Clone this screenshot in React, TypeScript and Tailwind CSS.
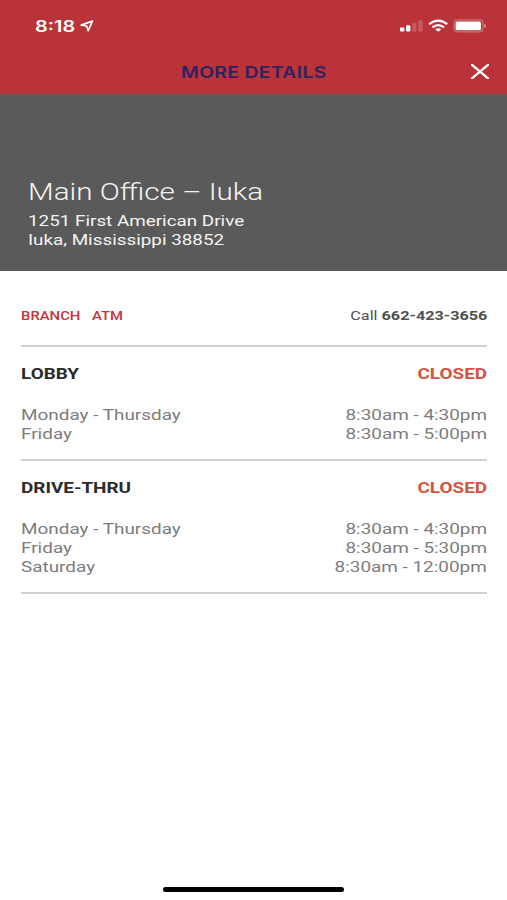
import React from 'react';

interface HoursRow {
  days: string;
  time: string;
}

interface HoursSection {
  title: string;
  status: string;
  rows: HoursRow[];
}

const sections: HoursSection[] = [
  {
    title: 'LOBBY',
    status: 'CLOSED',
    rows: [
      { days: 'Monday - Thursday', time: '8:30am - 4:30pm' },
      { days: 'Friday', time: '8:30am - 5:00pm' },
    ],
  },
  {
    title: 'DRIVE-THRU',
    status: 'CLOSED',
    rows: [
      { days: 'Monday - Thursday', time: '8:30am - 4:30pm' },
      { days: 'Friday', time: '8:30am - 5:30pm' },
      { days: 'Saturday', time: '8:30am - 12:00pm' },
    ],
  },
];

function StatusBar() {
  return (
    <div className="flex h-[52px] items-center justify-between pl-[35px] pr-[21px]">
      <div className="flex items-center">
        <span className="w-[40px] whitespace-nowrap pt-px font-['Inter',sans-serif] text-[15.5px] font-semibold leading-5">
          <span className="inline-block origin-left scale-x-[1.28]">8:18</span>
        </span>
        <svg className="ml-[5px]" width="14" height="12" viewBox="0 0 14 12" fill="none">
          <path d="M12.4 1.1 1.2 5.1 6.6 6 8.2 10.6Z" stroke="currentColor" strokeWidth="1.7" strokeLinejoin="round" />
        </svg>
      </div>
      <svg width="86" height="14" viewBox="0 0 86 14" fill="none">
        <rect x="0" y="8.4" width="4.4" height="4.2" rx="1" fill="currentColor" />
        <rect x="6" y="6.2" width="4.4" height="6.4" rx="1" fill="currentColor" />
        <rect x="12.1" y="3.8" width="4.4" height="8.8" rx="1" fill="currentColor" opacity="0.2" />
        <rect x="18.2" y="1.2" width="4.4" height="11.4" rx="1" fill="currentColor" opacity="0.2" />
        <g stroke="currentColor" strokeWidth="2.2">
          <path d="M29.2 5.1Q38.2-2 47.2 5.1" />
          <path d="M32.4 8.3Q38.2 3.8 44 8.3" />
        </g>
        <path d="M35.2 10.2Q38.2 8.2 41.2 10.2L38.2 12.8Z" fill="currentColor" />
        <rect x="54" y="0.9" width="29" height="12" rx="3.4" stroke="currentColor" strokeWidth="1.2" opacity="0.3" />
        <rect x="55.6" y="2.5" width="25.4" height="8.8" rx="1.5" fill="currentColor" />
        <path d="M84.3 4.8Q86 5.3 86 6.9Q86 8.5 84.3 9Z" fill="currentColor" opacity="0.45" />
      </svg>
    </div>
  );
}

function Header() {
  return (
    <div className="grid h-[42px] grid-cols-[1fr_auto_1fr] items-center pb-[3px]">
      <span />
      <h1 className="scale-x-[1.26] pt-[2px] font-['Inter',sans-serif] text-[15.3px] font-semibold leading-5 tracking-[0.3px] text-[#2c2262]">
        MORE DETAILS
      </h1>
      <button className="mr-[18px] justify-self-end" aria-label="Close">
        <svg width="18" height="15" viewBox="0 0 18 15" fill="none">
          <path d="M1 .8 17 14.4M17 .8 1 14.4" stroke="currentColor" strokeWidth="2.2" strokeLinecap="round" />
        </svg>
      </button>
    </div>
  );
}

function Hours({ section }: { section: HoursSection }) {
  return (
    <section className="border-b-2 border-[#cfcfcf] pb-[15px] pt-[18px]">
      <div className="flex justify-between text-[15.5px] font-bold leading-[19px]">
        <h3 className="origin-left scale-x-[1.22] text-[#2b2b2b]">{section.title}</h3>
        <span className="origin-right scale-x-[1.22] text-[#d5533f]">{section.status}</span>
      </div>
      <ul className="mt-[22px] text-[15.5px] leading-[19px] text-[#7c7c7c]">
        {section.rows.map((row) => (
          <li key={row.days} className="flex justify-between">
            <span className="origin-left scale-x-[1.22]">{row.days}</span>
            <span className="origin-right scale-x-[1.22]">{row.time}</span>
          </li>
        ))}
      </ul>
    </section>
  );
}

export default function App() {
  return (
    <div className="flex h-[900px] w-[507px] flex-col overflow-hidden bg-white font-['Roboto',sans-serif]">
      <header className="bg-[#ba3338] text-white">
        <StatusBar />
        <Header />
      </header>

      <div className="flex h-[177px] flex-col items-start justify-end bg-[#5a5a5a] pb-[21px] pl-7 text-[#f4f4f4]">
        <h2 className="mb-[6px] origin-left scale-x-[1.215] text-[24.4px] font-light leading-[28px]">Main Office – Iuka</h2>
        <p className="origin-left scale-x-[1.215] text-[15.5px] leading-[19px]">
          1251 First American Drive
          <br />
          Iuka, Mississippi 38852
        </p>
      </div>

      <main className="flex-1 pl-[21px] pr-5">
        <div className="flex h-[76px] items-center justify-between border-b-2 border-[#cfcfcf] pt-4">
          <div className="flex text-[12.6px] font-medium text-[#c1353b]">
            <span className="w-[71px]">
              <span className="inline-block origin-left scale-x-[1.18]">BRANCH</span>
            </span>
            <span className="origin-left scale-x-[1.18]">ATM</span>
          </div>
          <span className="origin-right scale-x-[1.22] text-[13.3px] text-[#505050]">
            Call <b className="font-bold">662-423-3656</b>
          </span>
        </div>
        {sections.map((section) => (
          <Hours key={section.title} section={section} />
        ))}
      </main>

      <div className="mx-auto mb-2 h-[5px] w-[181px] rounded-full bg-black" />
    </div>
  );
}
